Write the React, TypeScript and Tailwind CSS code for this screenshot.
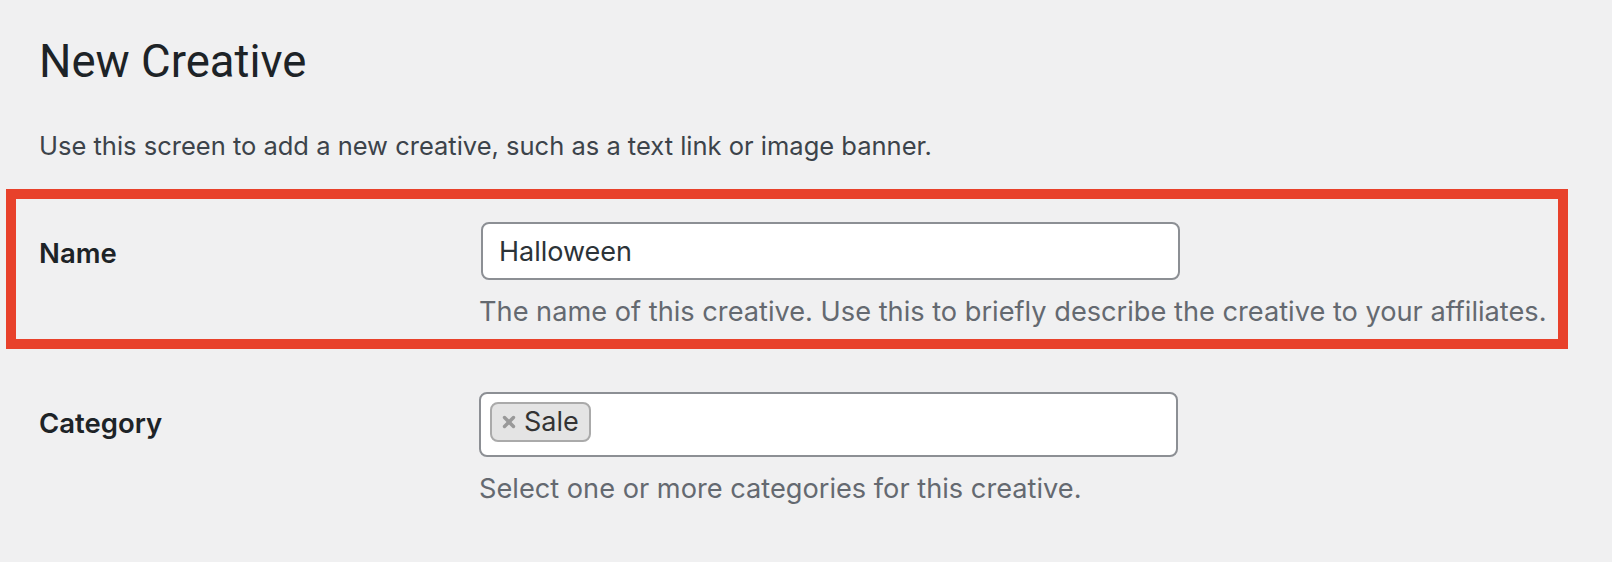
import { X } from "lucide-react";

const Field = ({ label, desc, children }: { label: string; desc: string; children: React.ReactNode }) => (
  <div className="flex items-start">
    <div className="w-[440px] shrink-0 pt-[2px] text-[27.5px] leading-[58px] font-semibold text-[#1d2327]">
      {label}
    </div>
    <div className="flex flex-col">
      {children}
      <p className="mt-[14px] text-[27.2px] leading-[36px] text-[#646970]">{desc}</p>
    </div>
  </div>
);

export default function App() {
  return (
    <div className="min-h-screen bg-[#f0f0f1] pt-[32px] font-['Inter',sans-serif] antialiased">
      <div className="pl-[39px]">
        <h1 className="font-['Roboto',sans-serif] text-[45.5px] leading-[60px] font-normal text-[#1d2327]">
          New Creative
        </h1>
        <p className="mt-[36px] text-[25.5px] leading-[36px] text-[#3c434a]">
          Use this screen to add a new creative, such as a text link or image banner.
        </p>
      </div>

      <div className="mt-[25px] ml-[6px] w-[1562px] border-[10px] border-[#e8412b] pl-[23px] pt-[23px] pb-[9px]">
        <Field label="Name" desc="The name of this creative. Use this to briefly describe the creative to your affiliates.">
          <input
            defaultValue="Halloween"
            className="ml-[2px] h-[58px] w-[699px] rounded-[8px] border-2 border-[#8c8f94] bg-white px-[16px] text-[27px] text-[#2c3338] outline-none"
          />
        </Field>
      </div>

      <div className="mt-[43px] pl-[39px]">
        <Field label="Category" desc="Select one or more categories for this creative.">
          <div className="flex h-[65px] w-[699px] items-start rounded-[8px] border-2 border-[#8c8f94] bg-white pl-[9px] pt-[8px]">
            <span className="flex h-[40px] items-center rounded-[8px] border-2 border-[#aaaaaa] bg-[#e4e4e4] pl-[8px] pr-[10px] text-[27px] text-[#333]">
              <X className="mr-[6px] h-[18px] w-[18px] text-[#999]" strokeWidth={4.5} />
              Sale
            </span>
          </div>
        </Field>
      </div>
    </div>
  );
}
